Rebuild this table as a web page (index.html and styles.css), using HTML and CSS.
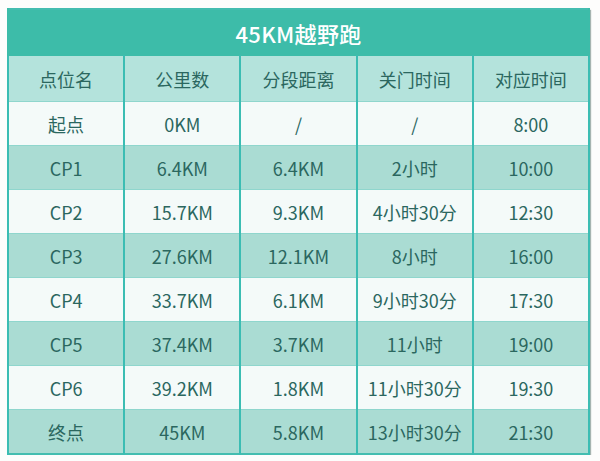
FILE: index.html
```html
<!DOCTYPE html>
<html lang="zh">
<head>
<meta charset="utf-8">
<link rel="stylesheet" href="styles.css">
</head>
<body>
<div class="wrap">
<table class="tbl">
<thead>
<tr class="title"><th colspan="5">45KM越野跑</th></tr>
<tr class="head"><th>点位名</th><th>公里数</th><th>分段距离</th><th>关门时间</th><th>对应时间</th></tr>
</thead>
<tbody>
<tr class="light"><td>起点</td><td>0KM</td><td>/</td><td>/</td><td>8:00</td></tr>
<tr class="dark"><td>CP1</td><td>6.4KM</td><td>6.4KM</td><td>2小时</td><td>10:00</td></tr>
<tr class="light"><td>CP2</td><td>15.7KM</td><td>9.3KM</td><td>4小时30分</td><td>12:30</td></tr>
<tr class="dark"><td>CP3</td><td>27.6KM</td><td>12.1KM</td><td>8小时</td><td>16:00</td></tr>
<tr class="light"><td>CP4</td><td>33.7KM</td><td>6.1KM</td><td>9小时30分</td><td>17:30</td></tr>
<tr class="dark"><td>CP5</td><td>37.4KM</td><td>3.7KM</td><td>11小时</td><td>19:00</td></tr>
<tr class="light"><td>CP6</td><td>39.2KM</td><td>1.8KM</td><td>11小时30分</td><td>19:30</td></tr>
<tr class="dark"><td>终点</td><td>45KM</td><td>5.8KM</td><td>13小时30分</td><td>21:30</td></tr>
</tbody>
</table>
</div>
</body>
</html>
```
FILE: styles.css
```css
html, body {
  margin: 0;
  padding: 0;
  background: #fdfdfc;
}
.wrap {
  padding: 8px 10px 0 7px;
}
.tbl {
  width: 583px;
  border-collapse: collapse;
  table-layout: fixed;
  font-family: "Noto Sans CJK SC", "Noto Sans", sans-serif;
  color: #2b675f;
  font-size: 18px;
  box-shadow: 1px 2px 1px rgba(60, 90, 85, 0.45);
  border: 2px solid #44bdb0;
}
.tbl th, .tbl td {
  text-align: center;
  padding: 0;
  border-left: 2px solid #3bbdb3;
  border-right: 2px solid #3bbdb3;
  border-top: 1px solid #8fd6cd;
  border-bottom: 1px solid #8fd6cd;
}
.title th {
  background: #3dbca9;
  color: #ffffff;
  font-size: 22px;
  font-weight: 500;
  height: 45px;
  border-color: #3dbca9;
  letter-spacing: 0.3px;
}
.head th {
  background: #b4e3dc;
  font-weight: 400;
  height: 45px;
}
.tbl td {
  height: 43px;
}
.light td {
  background: #f4faf9;
}
.dark td {
  background: #aadcd3;
}
```
